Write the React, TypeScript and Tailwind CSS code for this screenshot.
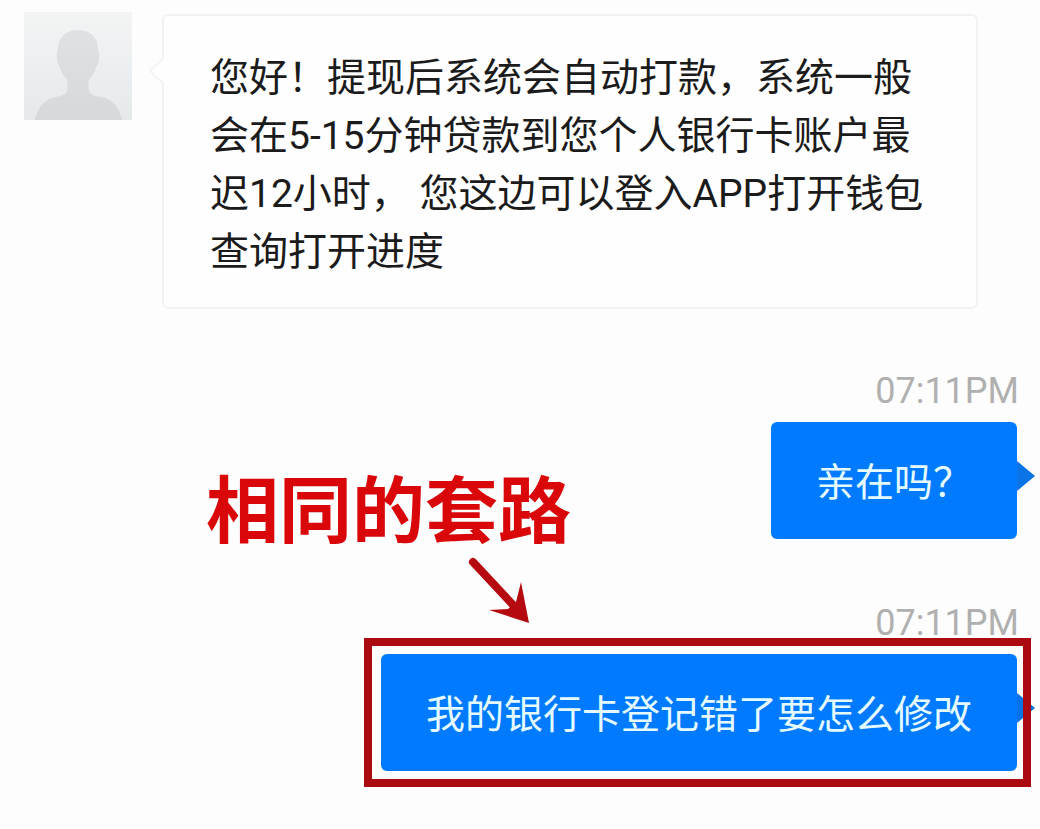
import type { ReactNode } from 'react'

interface SentMessageProps {
  time: string
  text: string
  children?: ReactNode
}

function Avatar() {
  return (
    <svg viewBox="0 0 108 108" className="size-27 shrink-0" role="img" aria-label="客服头像">
      <defs>
        <linearGradient id="avatar-bg" x1="0" y1="0" x2="0" y2="1">
          <stop offset="0" stopColor="#f3f4f4" />
          <stop offset="0.5" stopColor="#eceff1" />
          <stop offset="1" stopColor="#e6e9ea" />
        </linearGradient>
        <linearGradient id="avatar-person" x1="0" y1="0" x2="0" y2="1">
          <stop offset="0" stopColor="#dfe1e3" />
          <stop offset="1" stopColor="#d6d9da" />
        </linearGradient>
      </defs>
      <rect width="108" height="108" fill="url(#avatar-bg)" />
      <path
        d="M54 18c-13 0-20 8-20 19 0 3-2 5-1 9 0 5 2 7 3 9 1 5 3 8 6 11 2 3 2 8 1 13-2 5-8 5-15 7-10 4-14 10-17 22h87c-3-12-7-18-17-22-8-2-14-2-16-7-1-5-1-10 1-13 3-3 5-6 6-11 1-2 3-4 3-9 1-4-1-6-1-9 0-11-7-19-20-19z"
        fill="url(#avatar-person)"
      />
    </svg>
  )
}

function SentMessage({ time, text, children }: SentMessageProps) {
  return (
    <div className="flex flex-col items-end">
      <time className="-mr-[2px] text-4xl leading-[42px] text-[#b0b0b0]">{time}</time>
      <div className="relative mt-[10px] rounded-md bg-[#007aff] px-[45px] pt-8 pb-[27px] text-[#e4faff]">
        <p>{text}</p>
        <svg viewBox="0 0 18 30" className="absolute top-[39px] left-full h-[30px] w-[18px]" aria-hidden="true">
          <path d="M0 0l18 15L0 30z" fill="#0a74e6" />
        </svg>
        {children}
      </div>
    </div>
  )
}

// Red frame, caption and arrow laid over the message they point at
function Highlight({ caption }: { caption: string }) {
  return (
    <>
      <div className="absolute -top-4 -right-[14px] -bottom-4 -left-[17px] border-8 border-[#ab0a10]" />
      <strong className="absolute -top-[182px] -left-[175px] text-[73px] leading-20 font-bold whitespace-nowrap text-[#d9060a]">
        {caption}
      </strong>
      <svg viewBox="0 0 64 72" className="absolute -top-[98px] left-[87px] h-[72px] w-16" aria-hidden="true">
        <path d="M5 6L46 50" stroke="#b50a10" strokeWidth="8" strokeLinecap="round" />
        <path d="M61 67L53 26L48 46L40 53L21 54z" fill="#b50a10" />
      </svg>
    </>
  )
}

export default function App() {
  return (
    <main className="flex min-h-screen flex-col bg-[#fdfdfd] pt-3 pr-[23px] pb-14 pl-6 font-[Roboto,'Noto_Sans_CJK_SC',sans-serif] text-[39px] leading-[58px]">
      <div className="flex items-start pr-[39px]">
        <Avatar />
        <div className="relative mt-[2px] ml-[30px] flex-1 rounded-md border-2 border-[#f2f2f2] bg-[#fefefe] pt-[33px] pr-11 pb-[26px] pl-[46px] text-[#1b1b1b]">
          <p>您好！提现后系统会自动打款，系统一般会在5-15分钟贷款到您个人银行卡账户最迟12小时， 您这边可以登入APP打开钱包查询打开进度</p>
          <svg viewBox="0 0 16 28" className="absolute top-[41px] right-full h-7 w-4" aria-hidden="true">
            <path d="M16 1L2 14l14 13" fill="#fefefe" stroke="#f4f4f4" strokeWidth="2" />
          </svg>
        </div>
      </div>

      <div className="mt-[61px] flex flex-col gap-[63px]">
        <SentMessage time="07:11PM" text="亲在吗？" />
        <SentMessage time="07:11PM" text="我的银行卡登记错了要怎么修改">
          <Highlight caption="相同的套路" />
        </SentMessage>
      </div>
    </main>
  )
}
